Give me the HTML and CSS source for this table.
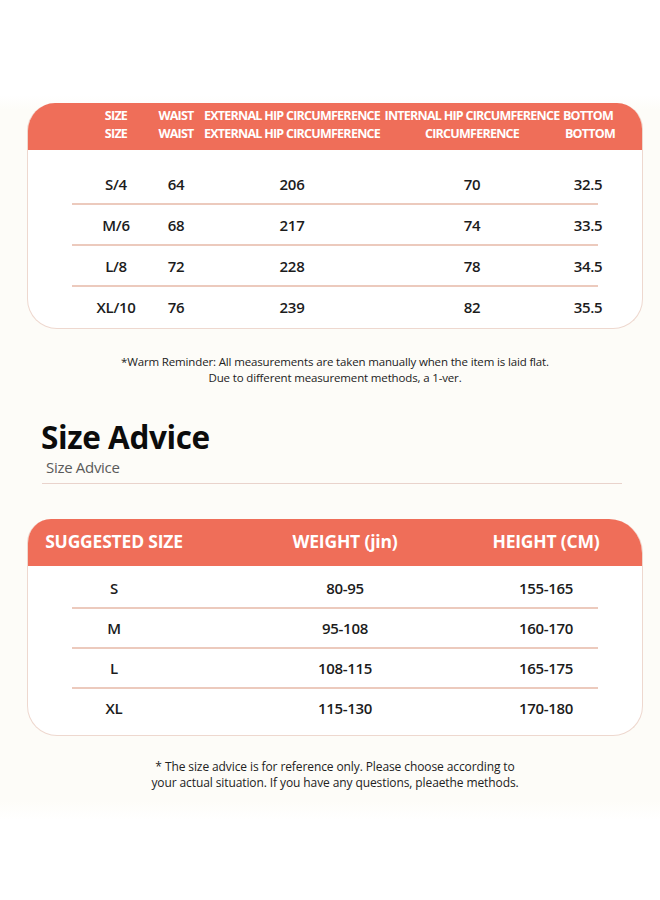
FILE: index.html
```html
<!DOCTYPE html>
<html lang="en">
<head>
<meta charset="utf-8">
<title>Size Chart</title>
<link rel="stylesheet" href="styles.css">
</head>
<body>
<main class="page">
  <section class="card card-measure">
    <div class="card-head">
      <div class="grid5 head-line">
        <span>SIZE</span><span>WAIST</span><span>EXTERNAL HIP CIRCUMFERENCE</span><span>INTERNAL HIP CIRCUMFERENCE</span><span>BOTTOM</span>
      </div>
      <div class="grid5 head-line">
        <span>SIZE</span><span>WAIST</span><span>EXTERNAL HIP CIRCUMFERENCE</span><span>CIRCUMFERENCE</span><span class="shift">BOTTOM</span>
      </div>
    </div>
    <div class="card-body body-measure">
      <div class="grid5 row"><span>S/4</span><span>64</span><span>206</span><span>70</span><span>32.5</span></div>
      <div class="grid5 row"><span>M/6</span><span>68</span><span>217</span><span>74</span><span>33.5</span></div>
      <div class="grid5 row"><span>L/8</span><span>72</span><span>228</span><span>78</span><span>34.5</span></div>
      <div class="grid5 row"><span>XL/10</span><span>76</span><span>239</span><span>82</span><span>35.5</span></div>
    </div>
  </section>

  <p class="note note-top">*Warm Reminder: All measurements are taken manually when the item is laid flat.<br>Due to different measurement methods, a 1-ver.</p>

  <h1 class="title">Size Advice</h1>
  <p class="subtitle">Size Advice</p>
  <hr class="rule">

  <section class="card card-advice">
    <div class="card-head head-advice">
      <div class="grid3 head-line3">
        <span>SUGGESTED SIZE</span><span>WEIGHT (jin)</span><span>HEIGHT (CM)</span>
      </div>
    </div>
    <div class="card-body body-advice">
      <div class="grid3 row row3"><span>S</span><span>80-95</span><span>155-165</span></div>
      <div class="grid3 row row3"><span>M</span><span>95-108</span><span>160-170</span></div>
      <div class="grid3 row row3"><span>L</span><span>108-115</span><span>165-175</span></div>
      <div class="grid3 row row3"><span>XL</span><span>115-130</span><span>170-180</span></div>
    </div>
  </section>

  <p class="note note-bottom">* The size advice is for reference only. Please choose according to<br>your actual situation. If you have any questions, pleaethe methods.</p>
</main>
</body>
</html>
```

FILE: styles.css
```css
* { box-sizing: border-box; }

html, body {
  margin: 0;
  padding: 0;
}

body {
  width: 660px;
  min-height: 900px;
  background: linear-gradient(#ffffff 0, #ffffff 95px, #fdfcf8 110px, #fdfcf8 800px, #ffffff 820px);
  font-family: "Open Sans", "Noto Sans", sans-serif;
  color: #1c1c1c;
}

.page {
  padding: 103px 17px 0 27px;
}

.card {
  width: 616px;
  background: #ffffff;
  border: 1px solid #eed8cf;
  border-top: 0;
  overflow: hidden;
}

.card-measure {
  border-radius: 28px 26px 30px 30px;
}

.card-advice {
  margin-top: 35px;
  border-radius: 24px 34px 30px 30px;
}

.card-head {
  background: #ef6e59;
  color: #ffffff;
  height: 47px;
  padding: 4px 44px 0;
  font-weight: 700;
}

.head-line {
  font-size: 12.5px;
  line-height: 18px;
  letter-spacing: -0.75px;
}

.grid5 {
  display: grid;
  grid-template-columns: 88px 32px 200px 160px 72px;
  white-space: nowrap;
}

.grid5 > span,
.grid3 > span {
  justify-self: center;
}

.shift {
  transform: translateX(2px);
}

.card-body {
  padding: 0 44px;
}

.body-measure {
  padding-top: 14px;
  padding-bottom: 2px;
}

.row {
  height: 41px;
  align-items: center;
  border-bottom: 2px solid #eccabd;
  font-size: 15px;
  font-weight: 600;
  letter-spacing: -0.3px;
}

.row:last-child {
  border-bottom: 0;
  height: 39px;
}

.note {
  margin: 0;
  width: 616px;
  text-align: center;
  color: #222222;
}

.note-top {
  margin-top: 25px;
  font-size: 11.5px;
  line-height: 16px;
  letter-spacing: -0.15px;
}

.title {
  margin: 29px 0 0 14px;
  font-size: 31.5px;
  line-height: 44px;
  font-weight: 700;
  letter-spacing: -0.4px;
  color: #0c0c0c;
}

.subtitle {
  margin: -2px 0 0 19px;
  font-size: 15px;
  line-height: 20px;
  color: #5a5a5a;
  letter-spacing: -0.3px;
}

.rule {
  margin: 6px 0 0 15px;
  width: 580px;
  height: 0;
  border: 0;
  border-top: 1px solid #e9d3cc;
}

.head-advice {
  padding-top: 0;
  padding-bottom: 4px;
  display: flex;
  align-items: center;
}

.grid3 {
  display: grid;
  grid-template-columns: 84px 378px 24px;
  white-space: nowrap;
  width: 100%;
}

.head-line3 {
  font-size: 17.5px;
  letter-spacing: -0.2px;
  line-height: 22px;
}

.body-advice {
  padding-top: 3px;
  padding-bottom: 8px;
}

.row3 {
  height: 40px;
}

.row3:last-child {
  height: 38px;
}

.note-bottom {
  margin-top: 23px;
  font-size: 12px;
  line-height: 15.5px;
  letter-spacing: -0.1px;
}
```
